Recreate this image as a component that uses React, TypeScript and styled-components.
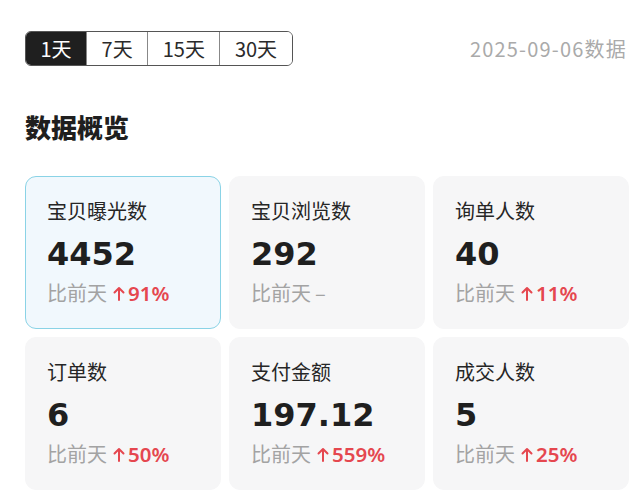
import React from 'react'
import styled, { createGlobalStyle } from 'styled-components'

const GlobalStyle = createGlobalStyle`
    html, body {
        margin: 0;
        padding: 0;
        background: #ffffff;
        font-family: "Noto Sans", "Noto Sans CJK SC", sans-serif;
    }
`

const Page = styled.div`
    width: 604px;
    padding: 31px 0 0 25px;
`

const TopBar = styled.div`
    display: flex;
    align-items: center;
    justify-content: space-between;
`

const Segments = styled.div`
    display: flex;
    height: 35px;
    border: 1px solid #555;
    border-radius: 6px;
    overflow: hidden;
    box-sizing: border-box;
`

const Segment = styled.div<{ $active?: boolean }>`
    display: flex;
    align-items: center;
    justify-content: center;
    padding: 0 14.5px;
    font-family: "Noto Sans CJK SC", sans-serif;
    font-size: 20px;
    color: ${p => (p.$active ? '#fff' : '#2a2a2a')};
    background: ${p => (p.$active ? '#1f1f1f' : '#fff')};
    & + & {
        border-left: 1px solid #888;
    }
`

const DateText = styled.div`
    font-family: "Noto Sans CJK SC", sans-serif;
    font-size: 20px;
    letter-spacing: 1.2px;
    color: #aaaaaa;
    margin-right: 2px;
`

const Heading = styled.h2`
    margin: 43px 0 0;
    font-family: "Noto Sans CJK SC", sans-serif;
    font-size: 26px;
    line-height: 36px;
    font-weight: 800;
    color: #1f1f1f;
`

const Grid = styled.div`
    display: grid;
    grid-template-columns: repeat(3, 196px);
    gap: 8px;
    margin-top: 31px;
`

const Card = styled.div<{ $active?: boolean }>`
    height: 153px;
    box-sizing: border-box;
    padding: 20px 21px;
    border-radius: 11px;
    border: 1px solid ${p => (p.$active ? '#8ad3e6' : '#f6f6f7')};
    background: ${p => (p.$active ? '#f1f8fd' : '#f6f6f7')};
`

const Title = styled.div`
    font-family: "Noto Sans CJK SC", sans-serif;
    font-size: 20px;
    line-height: 28px;
    color: #262626;
`

const Value = styled.div`
    margin-top: 9px;
    font-family: "DejaVu Sans", sans-serif;
    font-weight: 700;
    font-size: 32px;
    line-height: 40px;
    color: #1f1f1f;
`

const Compare = styled.div`
    display: flex;
    align-items: center;
    margin-top: 5px;
    font-family: "Noto Sans CJK SC", sans-serif;
    font-size: 20px;
    line-height: 28px;
    color: #a3a3a3;
`

const Change = styled.span`
    display: inline-flex;
    align-items: center;
    margin-left: 6px;
    font-family: "Noto Sans", sans-serif;
    font-size: 20.5px;
    font-weight: 600;
    color: #e5474f;
`

const Flat = styled.span`
    margin-left: 4px;
    color: #a3a3a3;
`

const UpArrow = () => (
    <svg width="12" height="15" viewBox="0 0 12 15" style={{ marginRight: 3 }}>
        <path d="M6 14V2M1.5 6.5L6 2l4.5 4.5" fill="none" stroke="#e5474f" strokeWidth="2" strokeLinecap="round" strokeLinejoin="round" />
    </svg>
)

const stats = [
    { title: '宝贝曝光数', value: '4452', change: '91%', active: true },
    { title: '宝贝浏览数', value: '292', change: '' },
    { title: '询单人数', value: '40', change: '11%' },
    { title: '订单数', value: '6', change: '50%' },
    { title: '支付金额', value: '197.12', change: '559%' },
    { title: '成交人数', value: '5', change: '25%' },
]

export default function App() {
    return (
        <Page>
            <GlobalStyle />
            <TopBar>
                <Segments>
                    <Segment $active>1天</Segment>
                    <Segment>7天</Segment>
                    <Segment>15天</Segment>
                    <Segment>30天</Segment>
                </Segments>
                <DateText>2025-09-06数据</DateText>
            </TopBar>

            <Heading>数据概览</Heading>

            <Grid>
                {stats.map(s => (
                    <Card key={s.title} $active={s.active}>
                        <Title>{s.title}</Title>
                        <Value>{s.value}</Value>
                        <Compare>
                            比前天
                            {s.change ? (
                                <Change>
                                    <UpArrow />
                                    {s.change}
                                </Change>
                            ) : (
                                <Flat>–</Flat>
                            )}
                        </Compare>
                    </Card>
                ))}
            </Grid>
        </Page>
    )
}
